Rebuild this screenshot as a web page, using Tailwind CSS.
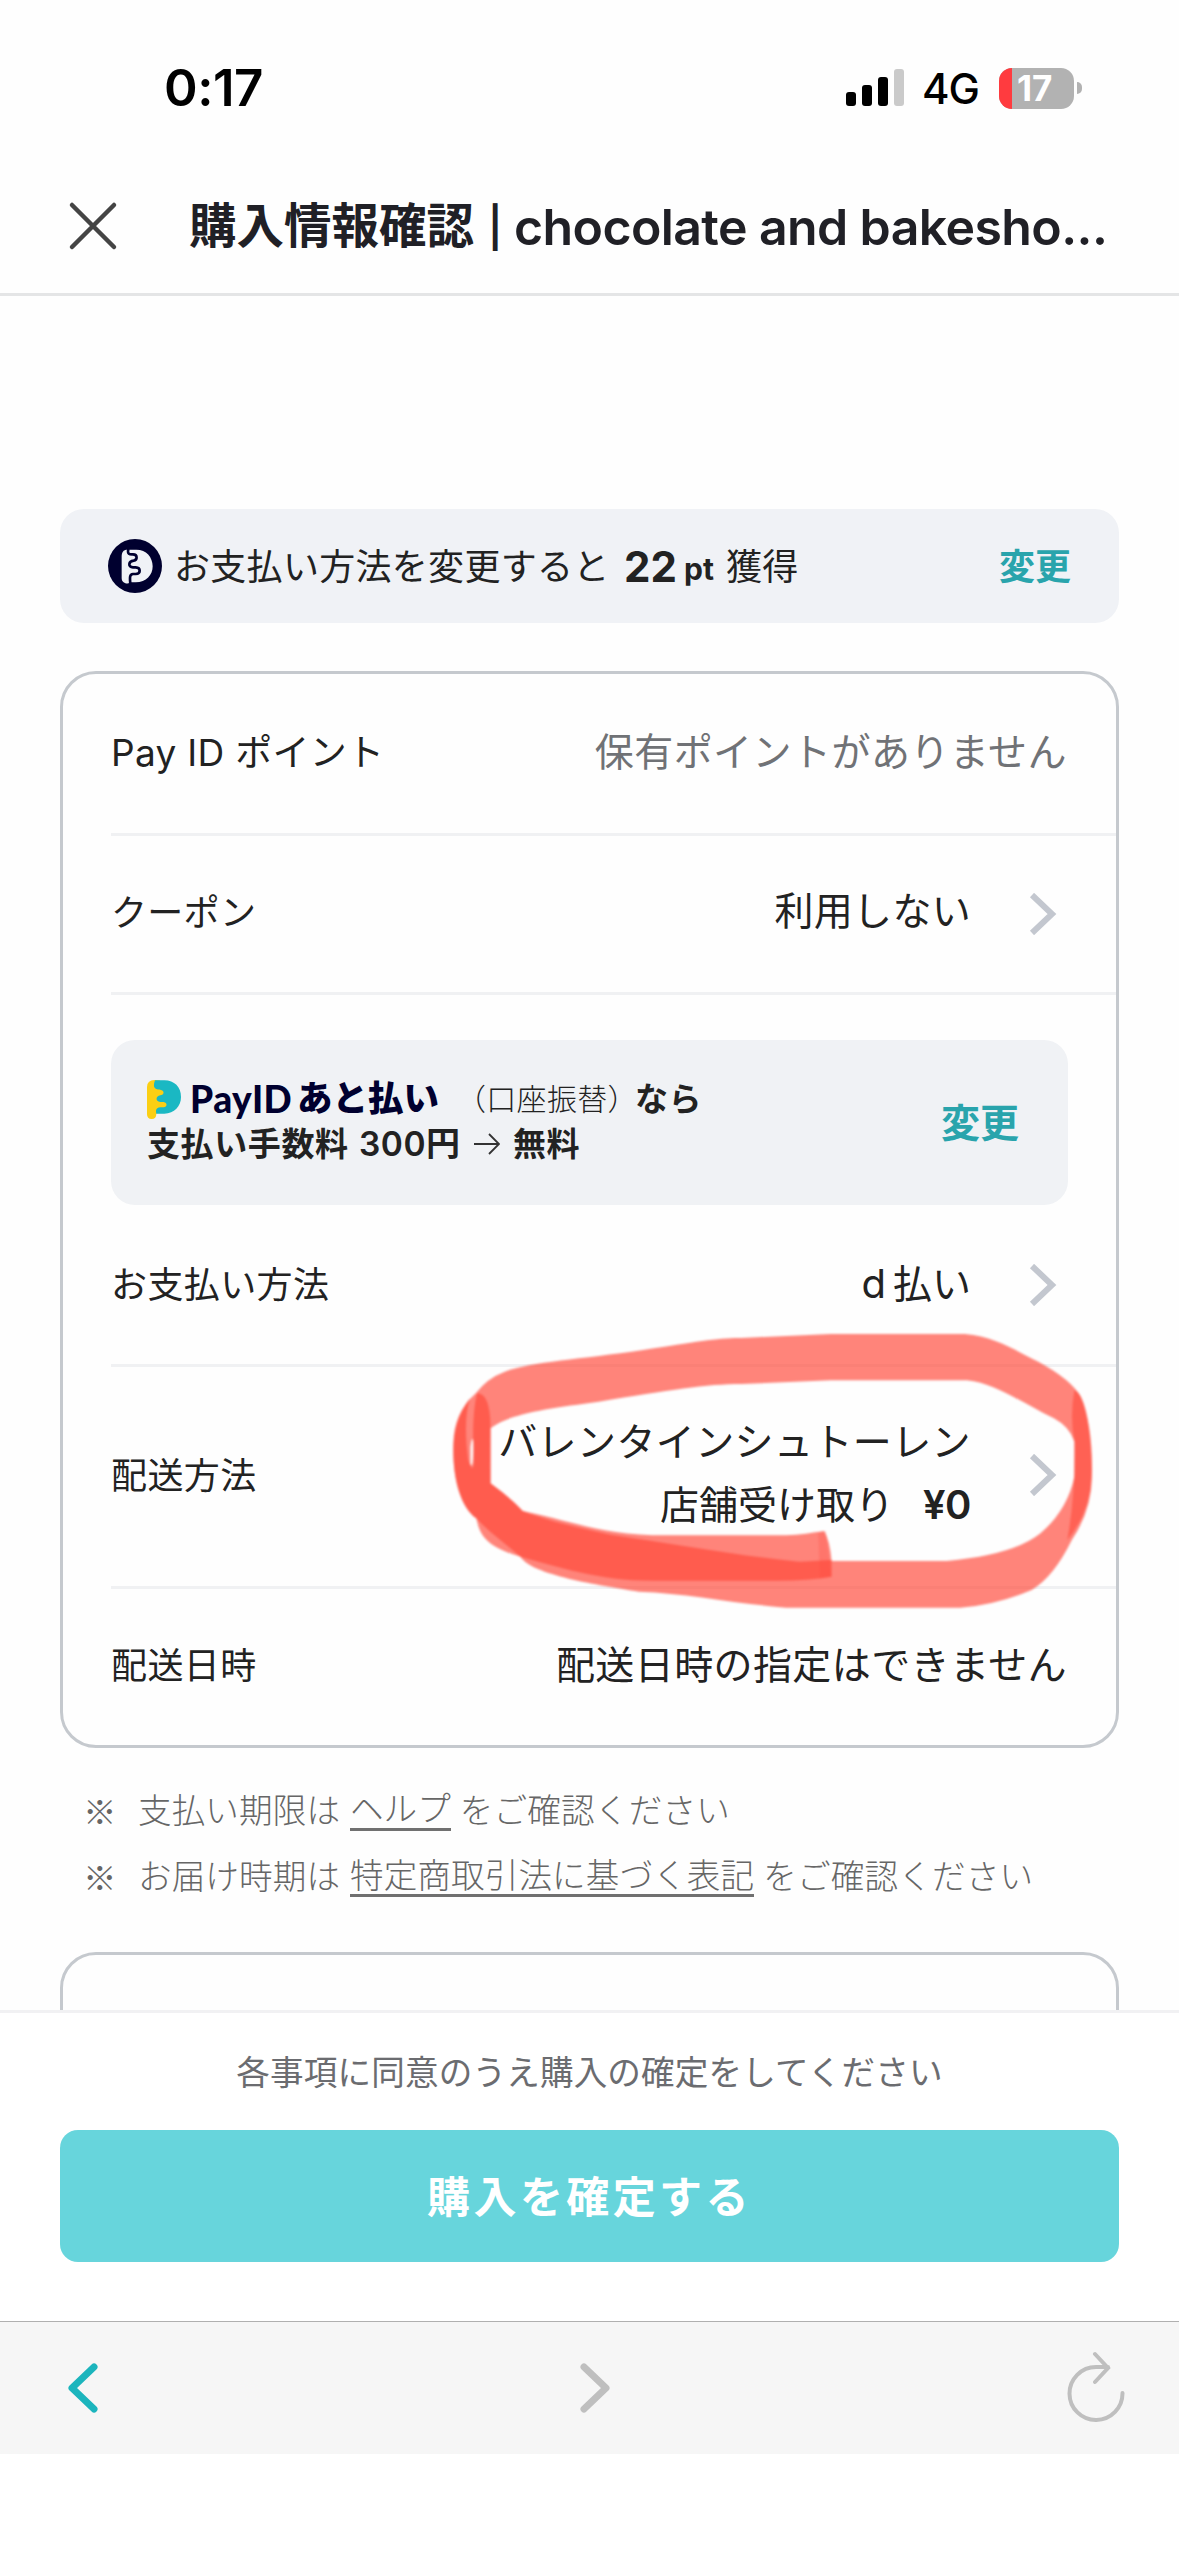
<!DOCTYPE html>
<html lang="ja">
<head>
<meta charset="utf-8">
<title>購入情報確認</title>
<script src="https://cdn.jsdelivr.net/npm/@tailwindcss/browser@4"></script>
</head>
<body class="w-[1179px] h-[2556px] overflow-hidden bg-[#fefefe] text-[#222] font-['Inter','Noto_Sans_CJK_JP',sans-serif] flex flex-col whitespace-nowrap">

<!-- Status bar -->
<div class="h-[147px] shrink-0 flex items-start justify-between pl-[164px] pr-[97px] pt-[57px] text-black">
  <div class="text-[51px] leading-[62px] font-semibold tracking-[-0.5px]">0:17</div>
  <div class="flex items-center h-[62px]">
    <svg class="w-[58px] h-[38px]" viewBox="0 0 58 38"><rect y="23" width="10" height="14" rx="3"/><rect x="16" y="16" width="10" height="21" rx="3"/><rect x="32" y="8" width="10" height="29" rx="3"/><rect x="48" width="10" height="37" rx="3" fill="#cacaca"/></svg>
    <span class="ml-[18px] w-[58px] text-[42px] font-medium tracking-[-1px] leading-[62px] pt-[2px]">4G</span>
    <span class="relative ml-[19px] w-[75px] h-[41px] rounded-[13px] overflow-hidden bg-[#b2b2b2] flex items-center">
      <span class="w-[13px] h-full bg-[#ff3b3f]"></span>
      <span class="ml-[5px] text-[35px] leading-[41px] font-bold text-white">17</span>
    </span>
    <span class="ml-[3px] w-[5px] h-[12px] rounded-r-full bg-[#b2b2b2]"></span>
  </div>
</div>

<!-- Title bar -->
<header class="h-[149px] shrink-0 border-b-[3px] border-[#e4e5e6] flex items-center pl-[68px] text-[#202026]">
  <svg class="w-[50px] h-[50px] mt-[12px]" viewBox="0 0 50 50" fill="none" stroke="#444" stroke-width="4.5" stroke-linecap="round"><path d="M4 4L46 46M46 4L4 46"/></svg>
  <h1 class="ml-[71px] mt-[12px] text-[50px] leading-[60px] font-semibold flex items-center"><span class="w-[299px] text-[47.500px] font-bold">購入情報確認</span><span class="w-[26px] text-[40px] pt-[4px]">|</span><span class="tracking-[-0.6px] pt-[2px]">chocolate and bakesho...</span></h1>
</header>

<main class="h-[1714px] shrink-0 overflow-hidden px-[60px] pt-[213px]">
  <!-- Points banner -->
  <div class="h-[114px] rounded-[24px] bg-[#f0f2f6] px-[48px] flex items-center">
    <svg class="w-[54px] h-[54px]" viewBox="9 8 162 162"><circle cx="90" cy="89" r="81" fill="#00002f"/><path d="M68 40C54 40 50 48 50 62V126C50 144 74 144 76 138H92C124 138 143 116 143 90C143 62 124 40 94 40Z" fill="#f0f2f6"/><path d="M70 38C66 56 76 54 84 54C98 54 98 71 86 73C70 75 68 92 84 93H92C108 94 108 112 92 113H84C74 114 74 122 76 142" fill="none" stroke="#00002f" stroke-width="8"/></svg>
    <span class="ml-[12px] w-[450px] text-[36px] tracking-[0.3px] pt-[2px]">お支払い方法を変更すると</span>
    <span class="w-[60px] text-[42px] font-bold">22</span>
    <span class="w-[42px] text-[30px] font-bold pt-[6px]">pt</span>
    <span class="text-[36px] tracking-[0.3px] pt-[2px]">獲得</span>
    <span class="ml-auto text-[36px] font-bold text-[#29a4ac] pt-[2px]">変更</span>
  </div>

  <!-- Order settings -->
  <section class="relative mt-[48px] h-[1077px] rounded-[36px] border-[3px] border-[#c5c9ce] pl-[48px]">
    <div class="h-[162px] border-b-[3px] border-[#f0f1f3] pr-[49px] flex items-center justify-between">
      <span class="text-[37px] tracking-[0.3px] pb-[2px]">Pay ID ポイント</span><span class="text-[39px] tracking-[0.45px] text-[#707276] pb-[2px]">保有ポイントがありません</span>
    </div>
    <div class="h-[159px] border-b-[3px] border-[#f0f1f3] pr-[59px] flex items-center">
      <span class="text-[36px] tracking-[0.3px] pb-[3px]">クーポン</span><span class="ml-auto text-[39px] tracking-[0.3px] pb-[5px]">利用しない</span>
      <svg class="ml-[58px] w-[28px] h-[42px]" viewBox="0 0 28 42" fill="none" stroke="#c3c7cf" stroke-width="6"><path d="M3 2L23 21L3 40"/></svg>
    </div>
    <div class="h-[372px] border-b-[3px] border-[#f0f1f3] pt-[45px]">
      <div class="h-[165px] w-[957px] rounded-[24px] bg-[#f0f2f5] pl-[36px] pr-[49px] flex items-center">
        <div class="text-[33px] leading-[44px] font-bold pb-[3px]">
          <div class="flex items-center h-[45px]">
            <svg class="w-[34px] h-[39px]" viewBox="22 27 102 117"><path d="M44 27Q22 28 22 48V130Q22 144 36 144Q50 144 50 128L84 110V55L60 28Z" fill="#fbcf14"/><path d="M46 28C36 56 52 55 64 57C75 59 74 72 62 73C48 75 46 92 62 93H72C84 95 83 108 72 109H62C48 111 48 118 50 128H74C104 128 124 106 124 78C124 48 104 28 74 28Z" fill="#1ab8c3"/></svg>
            <span class="ml-[9px] w-[107px] text-[37px] tracking-[0.5px] font-black font-['Lato'] text-[#00002f]">PayID</span>
            <span class="w-[163px] text-[35.500px] font-black text-[#00002f]">あと払い</span>
            <span class="w-[175px] text-[30px] font-light ml-[-4px] mr-[4px] tracking-[0.3px]">（口座振替）</span>
            <span class="tracking-[0.5px]">なら</span>
          </div>
          <div class="flex h-[44px] items-center"><span class="w-[212px] tracking-[0.6px]">支払い手数料</span><span class="w-[115px] tracking-[0.6px] text-[34px]"><span class="tracking-[0.5px] font-semibold text-[33.500px]">300</span>円</span><svg class="w-[26px] h-[24px]" viewBox="0 0 26 24" fill="none" stroke="#333" stroke-width="1.800"><path d="M0 12H25M15 2L25 12L15 22"/></svg><span class="ml-[13px] tracking-[0.6px]">無料</span></div>
        </div>
        <span class="ml-auto text-[39px] font-bold text-[#29a4ac] pt-[2px]">変更</span>
      </div>
      <div class="h-[159px] pr-[59px] flex items-center">
        <span class="text-[36px] tracking-[0.4px]">お支払い方法</span><span class="ml-auto text-[39px] pb-[2px]"><span class="mr-[-4px] text-[40px]">d</span> 払い</span>
        <svg class="ml-[58px] w-[28px] h-[42px]" viewBox="0 0 28 42" fill="none" stroke="#c3c7cf" stroke-width="6"><path d="M3 2L23 21L3 40"/></svg>
      </div>
    </div>
    <div class="h-[222px] border-b-[3px] border-[#f0f1f3] pr-[59px] flex items-center">
      <span class="text-[36px] tracking-[0.4px] pb-[2px]">配送方法</span>
      <span class="ml-auto text-right text-[39px] leading-[63px] pb-[7px]"><span class="tracking-[0.4px]">バレンタインシュトーレン</span><br>店舗受け取り<b class="ml-[29px] text-[40px] tracking-[-0.5px] font-semibold">¥0</b></span>
      <svg class="ml-[58px] mb-[3px] w-[28px] h-[42px]" viewBox="0 0 28 42" fill="none" stroke="#c3c7cf" stroke-width="6"><path d="M3 2L23 21L3 40"/></svg>
    </div>
    <div class="h-[156px] pr-[49px] flex items-center justify-between">
      <span class="text-[36px] tracking-[0.4px] pb-[2px]">配送日時</span><span class="text-[39px] tracking-[0.4px] pb-[4px]">配送日時の指定はできません</span>
    </div>

    <!-- Hand-drawn marker -->
    <svg class="absolute left-[357px] top-[636px] w-[700px] h-[320px] blur-[1px]" viewBox="0 0 1568 960" preserveAspectRatio="none" fill="#ff493b" fill-opacity=".68">
      <path d="M905 663C880 668 850 675 820 676H520C400 670 330 630 230 603C205 565 180 545 158 520V355C200 310 290 295 400 275C560 240 640 222 720 222L920 211H1225C1290 220 1350 280 1420 325Q1455 350 1466 395V500Q1450 600 1390 670Q1330 735 1180 753H922Q918 690 905 663ZM125 250Q150 205 190 185C250 155 360 148 500 120C620 95 670 83 720 84L920 72H1220C1290 80 1330 120 1385 155Q1460 210 1480 260Q1508 350 1505 500Q1505 600 1460 690Q1420 800 1370 840Q1290 885 1210 893H820C700 880 600 850 490 845C400 825 250 795 225 740C150 710 135 680 126 625C90 590 72 500 75 400Q75 310 125 250ZM113 410V460Q116 490 121 460V400Q117 370 113 410Z" fill-rule="evenodd"/>
      <path d="M230 603C300 640 380 660 430 675C560 700 700 735 850 755L922 750V800Q870 812 800 812H520C400 812 310 770 225 740C190 700 150 660 126 625C90 590 72 500 75 400Q80 320 112 265Q96 330 108 450Q120 500 119 400Q118 300 128 250Q157 250 158 350V520Q200 560 230 603Z"/>
      <path d="M892 668L909 664L921 800L896 806Z" fill-opacity=".25"/>
      <path d="M1466 240Q1500 260 1505 480Q1505 600 1450 690Q1468 560 1466 395Q1455 320 1466 240Z" fill-opacity=".6"/>
    </svg>
  </section>

  <!-- Notes -->
  <div class="mt-[30px] pl-[23px] text-[33.600px] font-light text-[#666] leading-[66px]">
    <div class="flex items-center h-[66px]"><span class="w-[55px] font-['Noto_Sans_CJK_JP']">※</span><span class="w-[212px] tracking-[0.1px]">支払い期限は</span><span class="border-b-[3px] border-[#707070] leading-[38px] h-[41px] mb-[2px]">ヘルプ</span><span class="ml-[9px] tracking-[0.2px]">をご確認ください</span></div>
    <div class="flex items-center h-[66px]"><span class="w-[55px] font-['Noto_Sans_CJK_JP']">※</span><span class="w-[212px] tracking-[0.1px]">お届け時期は</span><span class="border-b-[3px] border-[#707070] leading-[40px] h-[41px] mb-[2px] tracking-[0.1px]">特定商取引法に基づく表記</span><span class="ml-[9px] tracking-[0.2px]">をご確認ください</span></div>
  </div>

  <section class="mt-[42px] h-[200px] rounded-[36px] border-[3px] border-[#c5c9ce]"></section>
</main>

<!-- Confirm footer -->
<footer class="h-[311px] shrink-0 border-t-[3px] border-[#f1f1f3] px-[60px] pt-[36px] bg-white">
  <p class="text-center text-[33.600px] tracking-[0.15px] leading-[48px] text-[#6b6c70]">各事項に同意のうえ購入の確定をしてください</p>
  <button class="mt-[33px] w-full h-[132px] rounded-[18px] bg-[#67d5dc] text-white text-[43px] font-bold tracking-[3.4px] pt-[2px] block">購入を確定する</button>
</footer>

<!-- Browser toolbar -->
<nav class="h-[133px] shrink-0 border-t border-[#b0b0b0] bg-[#f6f6f6] flex items-center justify-between pl-[66px] pr-[52px]">
  <svg class="w-[34px] h-[52px]" viewBox="0 0 34 52" fill="none" stroke="#1cb5bd" stroke-width="7" stroke-linecap="round" stroke-linejoin="round"><path d="M28 5L6 26L28 47"/></svg>
  <svg class="w-[34px] h-[52px] ml-[23px]" viewBox="0 0 34 52" fill="none" stroke="#bfbfbf" stroke-width="7" stroke-linecap="round" stroke-linejoin="round"><path d="M6 5L28 26L6 47"/></svg>
  <svg class="w-[60px] h-[72px] mb-[4px]" viewBox="0 0 60 72" fill="none" stroke="#bfbfbf" stroke-width="4" stroke-linecap="round"><path d="M55.500 43A26.500 26.500 0 1 1 29 17H41M28 4L41 18L28 32"/></svg>
</nav>
<div class="h-[102px] bg-white"></div>
</body>
</html>
